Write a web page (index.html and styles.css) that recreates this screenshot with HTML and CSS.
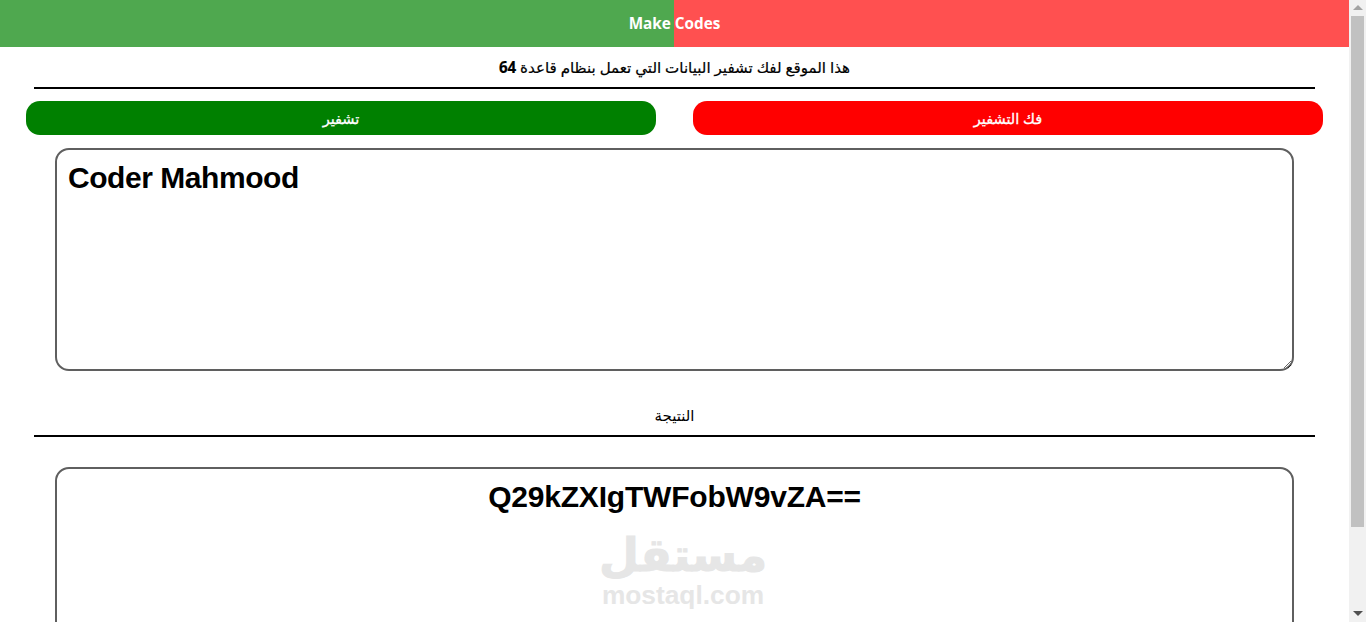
FILE: index.html
```html
<!DOCTYPE html>
<html lang="ar">
<head>
<meta charset="utf-8">
<title>Make Codes</title>
<link rel="stylesheet" href="styles.css">
</head>
<body>
<div class="window">
  <main class="page">
    <header class="top">
      <div class="half half-green"></div>
      <div class="half half-red"></div>
      <span class="brand">Make Codes</span>
    </header>
    <p class="intro" dir="rtl">هذا الموقع لفك تشفير البيانات التي تعمل بنظام قاعدة <b class="num">64</b></p>
    <hr class="rule">
    <div class="actions">
      <button class="btn btn-green" type="button">تشفير</button>
      <button class="btn btn-red" type="button">فك التشفير</button>
    </div>
    <div class="field"><textarea class="box box-input" spellcheck="false">Coder Mahmood</textarea></div>
    <p class="label">النتيجة</p>
    <hr class="rule">
    <div class="field result-wrap">
      <textarea class="box box-output" spellcheck="false" readonly>Q29kZXIgTWFobW9vZA==</textarea>
      <div class="mark">
        <span class="mark-ar">مستقل</span>
        <span class="mark-en">mostaql.com</span>
      </div>
    </div>
  </main>
  <aside class="scrollbar" aria-hidden="true">
    <span class="arrow arrow-up"></span>
    <span class="thumb"></span>
    <span class="arrow arrow-down"></span>
  </aside>
</div>
</body>
</html>
```
FILE: styles.css
```css
* { box-sizing: border-box; }
body {
  margin: 0;
  background: #fff;
  color: #000;
  font-family: "Open Sans", "Noto Sans", "DejaVu Sans", sans-serif;
}
.window { display: flex; height: 622px; overflow: hidden; }
.page { flex: 1; min-width: 0; }
.scrollbar {
  width: 17px;
  flex: none;
  display: flex;
  flex-direction: column;
  align-items: center;
  padding: 5px 2px 0;
  background: #f1f1f1;
}
.arrow { width: 0; height: 0; border-left: 5px solid transparent; border-right: 5px solid transparent; flex: none; }
.arrow-up { border-bottom: 5px solid #a3a3a3; }
.arrow-down { border-top: 5px solid #505050; }
.thumb { width: 100%; height: 511px; margin: 6px 0 84px; background: #c1c1c1; flex: none; }
.top { position: relative; display: flex; height: 47px; }
.half { flex: 1; }
.half-green { flex: none; width: 674px; background: #4fa84f; }
.half-red { background: #ff5050; }
.brand {
  position: absolute;
  inset: 0 0 2px;
  display: flex;
  align-items: center;
  justify-content: center;
  color: #fff;
  font-size: 15.3px;
  font-weight: 700;
}
.intro {
  margin: 0;
  height: 40px;
  padding-top: 8px;
  text-align: center;
  font-size: 15.1px;
  line-height: 24px;
  -webkit-text-stroke: 0.2px #000;
}
.num { font-weight: 700; }
.rule {
  width: 95%;
  height: 2px;
  margin: 0 auto;
  border: 0;
  background: #000;
}
.actions {
  display: flex;
  justify-content: space-between;
  padding: 12px 26px 13px;
}
.btn {
  width: 630px;
  height: 34px;
  border: 0;
  border-radius: 14px;
  color: #fff;
  font-family: inherit;
  font-size: 14.5px;
  font-weight: 400;
  -webkit-text-stroke: 0.3px #fff;
}
.btn-green { background: #008000; }
.btn-red { background: #ff0000; }
.field { display: flex; justify-content: center; }
.box {
  display: block;
  width: 1239px;
  margin: 0;
  padding: 11px 11px;
  border: 2px solid #5f5f5f;
  border-radius: 14px;
  outline: 0;
  color: #000;
  font-family: "Liberation Sans", Arial, sans-serif;
  font-size: 30px;
  font-weight: 700;
  line-height: 34px;
}
.box-input { height: 223px; letter-spacing: -0.45px; }
.box-output { height: 223px; text-align: center; letter-spacing: -0.2px; }
.label {
  margin: 0;
  height: 64px;
  padding-top: 32px;
  text-align: center;
  font-size: 15px;
  line-height: 24px;
}
.result-wrap { position: relative; margin-top: 30px; }
.mark {
  position: absolute;
  left: 601px;
  top: 62px;
  width: 164px;
  display: flex;
  flex-direction: column;
  align-items: center;
  color: #e6e6e6;
  font-weight: 700;
  pointer-events: none;
}
.mark-ar {
  font-family: "DejaVu Sans", sans-serif;
  font-size: 46px;
  line-height: 52px;
  -webkit-text-stroke: 1px #e6e6e6;
}
.mark-en { font-family: "Liberation Sans", Arial, sans-serif; font-size: 26.3px; line-height: 28px; }
```
